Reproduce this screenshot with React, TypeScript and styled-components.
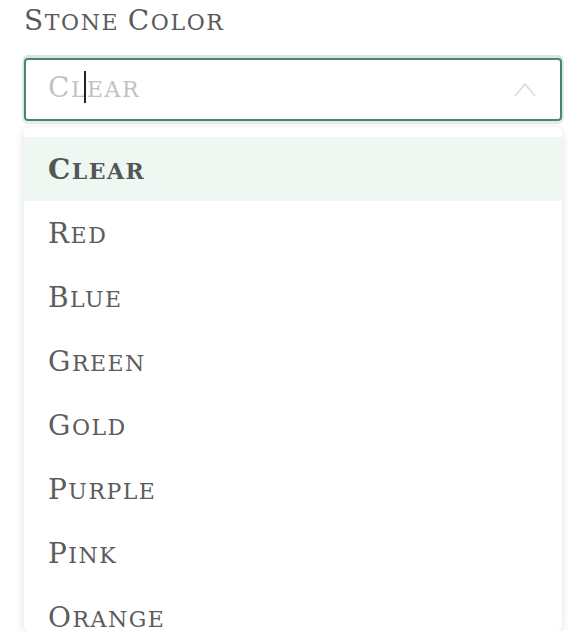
import styled, { createGlobalStyle } from 'styled-components';

const GlobalStyle = createGlobalStyle`
  html, body {
    margin: 0;
    padding: 0;
    background: #ffffff;
  }
  body {
    font-family: "DejaVu Serif", "Liberation Serif", serif;
  }
`;

const Caps = styled.span<{ $spacing?: number }>`
  text-transform: uppercase;
  font-size: 22px;
  letter-spacing: ${(p) => p.$spacing ?? 1.5}px;
  white-space: pre;
`;

const Initial = styled.span`
  font-size: 28px;
`;

const SmallCaps = ({ text, spacing }: { text: string; spacing?: number }) => (
  <Caps $spacing={spacing}>
    {text.split(' ').map((word, i) => (
      <span key={i}>
        {i > 0 && ' '}
        <Initial>{word[0]}</Initial>
        {word.slice(1)}
      </span>
    ))}
  </Caps>
);

const Field = styled.div`
  padding: 2px 12px 0 24px;
  display: flex;
  flex-direction: column;
`;

const Label = styled.div`
  color: #5a5a5a;
  height: 36px;
  line-height: 38px;
  margin-bottom: 20px;
`;

const Control = styled.div`
  display: flex;
  align-items: center;
  height: 59px;
  padding: 0 24px 0 22px;
  border: 2px solid #4e8370;
  border-radius: 4px;
  box-shadow: 0 -2px 0 1px #d3e7df, 0 1px 0 2px #e4efea;
`;

const Placeholder = styled.div`
  flex: 1;
  color: #c2c2c2;
  line-height: 42px;
  position: relative;
`;

const Caret = styled.span`
  position: absolute;
  left: 36px;
  top: 4px;
  width: 2px;
  height: 32px;
  background: #222;
`;

const Menu = styled.ul`
  list-style: none;
  margin: 6px 0 0;
  padding: 10px 0 0;
  height: 494px;
  overflow: hidden;
  border-radius: 6px;
  background: #fff;
  box-shadow: 0 2px 10px rgba(0, 0, 0, 0.12);
`;

const Option = styled.li<{ $active?: boolean }>`
  height: 64px;
  line-height: 66px;
  padding: 0 24px;
  color: ${(p) => (p.$active ? '#515854' : '#5c5c5c')};
  font-weight: ${(p) => (p.$active ? 700 : 400)};
  background: ${(p) => (p.$active ? '#eff7f3' : 'transparent')};
`;

const colors = ['Clear', 'Red', 'Blue', 'Green', 'Gold', 'Purple', 'Pink', 'Orange'];

export default function App() {
  return (
    <>
      <GlobalStyle />
      <Field>
        <Label>
          <SmallCaps text="Stone Color" spacing={1.6} />
        </Label>
        <Control>
          <Placeholder>
            <SmallCaps text="Clear" />
            <Caret />
          </Placeholder>
          <svg width="22" height="15" viewBox="0 0 22 15" fill="none">
            <path d="M1 14L11 2l10 12" stroke="#dadada" strokeWidth="1.6" />
          </svg>
        </Control>
        <Menu>
          {colors.map((c, i) => (
            <Option key={c} $active={i === 0}>
              <SmallCaps text={c} />
            </Option>
          ))}
        </Menu>
      </Field>
    </>
  );
}
